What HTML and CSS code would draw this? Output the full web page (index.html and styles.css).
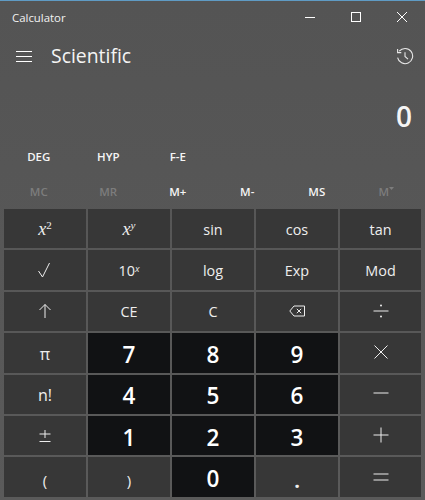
FILE: index.html
```html
<!DOCTYPE html>
<html lang="en">
<head>
<meta charset="utf-8">
<title>Calculator</title>
<link rel="stylesheet" href="styles.css">
</head>
<body>
<div class="app">
  <div class="titlebar">
    <span class="app-title">Calculator</span>
    <div class="win-controls">
      <svg class="win-icon" viewBox="0 0 12 12"><path d="M1 6.5H11" /></svg>
      <svg class="win-icon" viewBox="0 0 12 12"><rect x="1.5" y="1.5" width="9" height="9" /></svg>
      <svg class="win-icon" viewBox="0 0 12 12"><path d="M1 1L11 11M11 1L1 11" /></svg>
    </div>
  </div>
  <header class="header">
    <svg class="menu-icon" viewBox="0 0 16 12"><path d="M0 1.5H16M0 6.5H16M0 11.5H16" /></svg>
    <h1 class="mode-title">Scientific</h1>
    <svg class="history-icon" viewBox="0 0 18 18"><path d="M3.2 4.2A7.6 7.6 0 1 1 1.6 10.6" /><path d="M1.6 1.9V5.6H5.3" /><path d="M9 5.2V9.4L12 12.2" /></svg>
  </header>
  <div class="display">0</div>
  <div class="mode-row">
    <button class="flat">DEG</button>
    <button class="flat">HYP</button>
    <button class="flat">F-E</button>
  </div>
  <div class="mode-row memory">
    <button class="flat off">MC</button>
    <button class="flat off">MR</button>
    <button class="flat">M+</button>
    <button class="flat">M-</button>
    <button class="flat">MS</button>
    <button class="flat off">M<svg class="caret" viewBox="0 0 5 3"><path d="M0 0H5L2.5 3Z" /></svg></button>
  </div>
  <div class="keys">
    <button class="key math"><span><i>x</i><sup>2</sup></span></button>
    <button class="key math"><span><i>x</i><sup><i>y</i></sup></span></button>
    <button class="key">sin</button>
    <button class="key">cos</button>
    <button class="key">tan</button>

    <button class="key icon"><svg class="glyph" viewBox="0 0 16 16"><path d="M1.5 9L5.5 15L12.5 1" /></svg></button>
    <button class="key ten"><span>10<sup><i>x</i></sup></span></button>
    <button class="key">log</button>
    <button class="key">Exp</button>
    <button class="key">Mod</button>

    <button class="key icon"><svg class="glyph" viewBox="0 0 16 16"><path d="M8 15V1.5M2.5 7L8 1.5L13.5 7" /></svg></button>
    <button class="key">CE</button>
    <button class="key">C</button>
    <button class="key icon"><svg class="glyph back" viewBox="0 0 16 12"><path d="M0.8 6L5 1H15.5V11H5Z" /><path d="M7.8 3.8L12.2 8.2M12.2 3.8L7.8 8.2" /></svg></button>
    <button class="key icon"><svg class="glyph" viewBox="0 0 16 16"><path d="M0.5 8H15.5" /><circle cx="8" cy="2.5" r="1" class="dot" /><circle cx="8" cy="13.5" r="1" class="dot" /></svg></button>

    <button class="key big">π</button>
    <button class="key digit">7</button>
    <button class="key digit">8</button>
    <button class="key digit">9</button>
    <button class="key icon raised"><svg class="glyph" viewBox="0 0 16 16"><path d="M1.5 1.5L14.5 14.5M14.5 1.5L1.5 14.5" /></svg></button>

    <button class="key big">n!</button>
    <button class="key digit">4</button>
    <button class="key digit">5</button>
    <button class="key digit">6</button>
    <button class="key icon raised"><svg class="glyph" viewBox="0 0 16 16"><path d="M0.5 8H15.5" /></svg></button>

    <button class="key icon"><svg class="glyph small" viewBox="0 0 12 12"><path d="M6 0V8M0.5 4H11.5M0.5 11.5H11.5" /></svg></button>
    <button class="key digit">1</button>
    <button class="key digit">2</button>
    <button class="key digit">3</button>
    <button class="key icon raised"><svg class="glyph" viewBox="0 0 16 16"><path d="M0.5 8H15.5M8 0.5V15.5" /></svg></button>

    <button class="key low">(</button>
    <button class="key low">)</button>
    <button class="key digit">0</button>
    <button class="key point">.</button>
    <button class="key icon"><svg class="glyph" viewBox="0 0 16 16"><path d="M0.5 5H15.5M0.5 11H15.5" /></svg></button>
  </div>
</div>
</body>
</html>
```
FILE: styles.css
```css
* { box-sizing: border-box; }
html, body { margin: 0; padding: 0; }
body {
  width: 425px;
  height: 500px;
  overflow: hidden;
  font-family: "Open Sans", "Noto Sans", sans-serif;
  color: #fff;
}
.app {
  width: 425px;
  height: 500px;
  background: linear-gradient(#545454, #5a5a5a);
  border-top: 1px solid #5f9bc4;
  display: flex;
  flex-direction: column;
}
.titlebar {
  height: 32px;
  display: flex;
  align-items: center;
  justify-content: space-between;
  padding-left: 12px;
}
.app-title { font-size: 11.4px; color: #f2f2f2; }
.win-controls { display: flex; }
.win-icon {
  width: 46px;
  height: 12px;
  fill: none;
  stroke: #fff;
  stroke-width: 1;
}
.header {
  height: 46px;
  display: flex;
  align-items: center;
  padding-left: 16px;
  padding-right: 11px;
}
.menu-icon { width: 16px; height: 12px; fill: none; stroke: #fff; stroke-width: 1; }
.mode-title {
  margin: -2px 0 0 19px;
  font-size: 19.4px;
  font-weight: 400;
  color: #f4f4f4;
  flex: 1;
}
.history-icon { width: 18px; height: 18px; fill: none; stroke: #e8e8e8; stroke-width: 1.1; }
.display {
  height: 58px;
  display: flex;
  align-items: flex-end;
  justify-content: flex-end;
  padding-right: 13px;
  padding-bottom: 2px;
  font-size: 28px;
  font-weight: 600;
  line-height: 38px;
  color: #f5f5f5;
}
.mode-row {
  display: grid;
  grid-template-columns: repeat(6, 69.5px);
  padding: 0 4px;
  height: 34px;
  margin-top: 3px;
}
.memory { margin-top: 0; margin-bottom: 1px; }
.flat {
  background: none;
  border: 0;
  padding: 0 0 1px;
  color: #f5f5f5;
  font: 600 11.5px "Open Sans", "Noto Sans", sans-serif;
}
.memory .flat { padding: 1px 0 0; }
.flat.off { color: #7d7d7d; }
.caret { width: 5px; height: 3px; fill: #7d7d7d; vertical-align: 6px; }
.keys {
  display: grid;
  grid-template-columns: 82px 82px 82px 82px 81px;
  grid-auto-rows: 39.4px;
  gap: 2px;
  padding: 0 4px;
}
.key {
  background: #373737;
  border: 0;
  padding: 1px 0 0;
  color: #eee;
  font: 400 14.4px "Open Sans", "Noto Sans", sans-serif;
  display: flex;
  align-items: center;
  justify-content: center;
}
.key.icon { padding: 0; }
.key.raised { padding: 0 0 2px; }
.digit { background: #111214; color: #fff; font-size: 22.5px; font-weight: 600; }
.key.digit { padding-top: 3px; }
.math { font-family: "Liberation Serif", serif; font-size: 18px; }
.math sup { font-size: 11px; line-height: 0; vertical-align: 6px; }
.ten sup { font-size: 9.5px; line-height: 0; vertical-align: 4px; }
.key.big { font-size: 16px; padding-top: 2px; }
.key.low { padding-top: 5px; font-size: 15px; }
.key.point { font-size: 20px; padding-top: 6px; font-weight: 700; }
.glyph { width: 16px; height: 16px; fill: none; stroke: #eee; stroke-width: 1; }
.glyph .dot { fill: #eee; stroke: none; }
.glyph.back { height: 12px; }
.glyph.small { width: 12px; height: 12px; }
```
